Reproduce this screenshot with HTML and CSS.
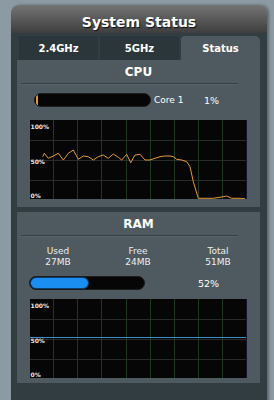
FILE: index.html
```html
<!DOCTYPE html>
<html>
<head>
<meta charset="utf-8">
<link rel="stylesheet" href="styles.css">
</head>
<body>
<div class="panel">
  <div class="header">System Status</div>
  <div class="body">
    <div class="tabs">
      <div class="tab">2.4GHz</div>
      <div class="tab">5GHz</div>
      <div class="tab active">Status</div>
    </div>
    <div class="section">
      <div class="title">CPU</div>
      <div class="rule"></div>
      <div class="row cpu-row">
        <div class="bar cpu-bar"><div class="fill orange" style="width:1%"></div></div>
        <span class="core">Core 1</span>
        <span class="pct">1%</span>
      </div>
      <svg class="chart" width="217" height="79" viewBox="0 0 217 79">
        <rect x="0" y="0" width="217" height="79" fill="#060606"/>
        <g stroke="#2a2a2a" stroke-width="1">
          <line x1="0" y1="20.5" x2="217" y2="20.5"/>
          <line x1="0" y1="40.5" x2="217" y2="40.5"/>
          <line x1="0" y1="60.5" x2="217" y2="60.5"/>
        </g>
        <g stroke="#1d3a21" stroke-width="1">
          <line x1="23.5" y1="0" x2="23.5" y2="79"/>
          <line x1="47.5" y1="0" x2="47.5" y2="79"/>
          <line x1="71.5" y1="0" x2="71.5" y2="79"/>
          <line x1="96.5" y1="0" x2="96.5" y2="79"/>
          <line x1="120.5" y1="0" x2="120.5" y2="79"/>
          <line x1="144.5" y1="0" x2="144.5" y2="79"/>
          <line x1="168.5" y1="0" x2="168.5" y2="79"/>
          <line x1="192.5" y1="0" x2="192.5" y2="79"/>
        </g>
        <polyline fill="none" stroke="#e39a34" stroke-width="1" points="12.7,36.7 14.3,33.3 18.3,38.3 23.3,36 28.3,33.3 33.3,40 38.3,33.3 43.3,30 48.3,39.3 53.3,36 58.3,36.7 63.3,40 68.3,36.7 73.3,35 78.3,38.3 83.3,34 88.3,37.3 91.7,40 96.7,34.3 100.7,42.7 105,35 110,34.3 115,40 120,40 125,38.3 130,36.7 135,36 140,36 143.3,36.7 146.7,39.3 151.7,40 156.7,41.7 160,46.7 163.3,61.7 168.3,78.3 183.3,78.3 190,77.3 196.7,76 201.7,78.3 210,78.3 215,78.8"/>
        <g class="lbl">
          <text x="0.5" y="8.5">100%</text>
          <text x="0.5" y="44">50%</text>
          <text x="0.5" y="78">0%</text>
        </g>
        <line x1="216.5" y1="0" x2="216.5" y2="79" stroke="#141430"/>
      </svg>
    </div>
    <div class="section ram">
      <div class="title">RAM</div>
      <div class="rule"></div>
      <div class="stats">
        <div class="stat">Used<br>27MB</div>
        <div class="stat">Free<br>24MB</div>
        <div class="stat">Total<br>51MB</div>
      </div>
      <div class="row ram-row">
        <div class="bar ram-bar"><div class="fill blue" style="width:52%"></div></div>
        <span class="pct">52%</span>
      </div>
      <svg class="chart" width="217" height="79" viewBox="0 0 217 79">
        <rect x="0" y="0" width="217" height="79" fill="#060606"/>
        <g stroke="#2a2a2a" stroke-width="1">
          <line x1="0" y1="20.5" x2="217" y2="20.5"/>
          <line x1="0" y1="40.5" x2="217" y2="40.5"/>
          <line x1="0" y1="60.5" x2="217" y2="60.5"/>
        </g>
        <g stroke="#1d3a21" stroke-width="1">
          <line x1="23.5" y1="0" x2="23.5" y2="79"/>
          <line x1="47.5" y1="0" x2="47.5" y2="79"/>
          <line x1="71.5" y1="0" x2="71.5" y2="79"/>
          <line x1="96.5" y1="0" x2="96.5" y2="79"/>
          <line x1="120.5" y1="0" x2="120.5" y2="79"/>
          <line x1="144.5" y1="0" x2="144.5" y2="79"/>
          <line x1="168.5" y1="0" x2="168.5" y2="79"/>
          <line x1="192.5" y1="0" x2="192.5" y2="79"/>
        </g>
        <line x1="0" y1="38.5" x2="217" y2="38.5" stroke="#3b8fc8" stroke-width="1"/>
        <g class="lbl">
          <text x="0.5" y="8.5">100%</text>
          <text x="0.5" y="44">50%</text>
          <text x="0.5" y="78">0%</text>
        </g>
        <line x1="216.5" y1="0" x2="216.5" y2="79" stroke="#141430"/>
      </svg>
    </div>
  </div>
</div>
</body>
</html>
```

FILE: styles.css
```css
html, body {
  margin: 0;
  padding: 0;
  height: 400px;
  overflow: hidden;
}
body {
  background: #8c9ba3;
  font-family: "DejaVu Sans", Verdana, sans-serif;
  color: #fff;
}
.panel {
  margin: 5px 0 0 11px;
  width: 256px;
  box-shadow: 2px 0 3px rgba(0,0,0,0.35);
  border-radius: 8px 8px 0 0;
}
.header {
  height: 22px;
  padding-top: 6px;
  line-height: 22px;
  font-size: 14px;
  font-weight: bold;
  text-align: center;
  border-radius: 8px 8px 0 0;
  background: linear-gradient(#747474, #3e3e3e);
  text-shadow: 1px 1px 1px #111;
}
.body {
  background: #323d42;
  padding: 3px 0 0 6px;
  height: 380px;
}
.tabs {
  display: flex;
  gap: 2px;
  margin-left: 2px;
  width: 241px;
}
.tab {
  flex: 1;
  height: 22px;
  padding-top: 2px;
  line-height: 22px;
  font-size: 10px;
  font-weight: bold;
  text-align: center;
  background: #2b363b;
  border-radius: 3px 3px 0 0;
}
.tab.active {
  background: #4e5a60;
  border-radius: 4px 5px 0 0;
}
.section {
  width: 243px;
  background: #4e5a60;
  padding-bottom: 8px;
}
.section.ram {
  margin-top: 5px;
  padding-bottom: 5px;
}
.title {
  padding-top: 4px;
  line-height: 17px;
  font-size: 12px;
  font-weight: bold;
  text-align: center;
}
.rule {
  margin: 2px 0 0 4px;
  width: 217px;
  height: 1px;
  background: #363f44;
  border-bottom: 1px solid #56636a;
}
.row {
  display: flex;
  align-items: center;
  width: 202px;
  font-size: 9px;
}
.cpu-row {
  margin-top: 8px;
  padding-left: 17px;
  width: 185px;
}
.ram-row {
  margin-top: 8px;
  padding-left: 12px;
  width: 190px;
}
.bar {
  height: 14px;
  background: #060606;
  border-radius: 7px;
  box-sizing: border-box;
  border: 1px solid #1c1c1c;
  overflow: hidden;
}
.cpu-bar { width: 117px; }
.ram-bar { width: 116px; }
.fill {
  height: 100%;
  border-radius: 6px;
}
.fill.orange {
  background: #e39a34;
  min-width: 2px;
  border-radius: 1px;
  margin-left: 1px;
}
.fill.blue {
  background: #1b8ef2;
  border: 1px solid #0a3d6a;
  box-sizing: border-box;
}
.core {
  margin-left: 3px;
}
.pct {
  margin-left: auto;
  font-size: 9.5px;
}
.chart {
  display: block;
  margin: 13px 0 0 13px;
}
.ram .chart {
  margin-top: 9px;
}
.lbl {
  font-family: "DejaVu Sans", Verdana, sans-serif;
  font-size: 6px;
  font-weight: bold;
  fill: #e6e6e6;
}
.stats {
  display: grid;
  grid-template-columns: 80px 80px 80px;
  margin: 9px 0 0 1px;
  font-size: 9px;
  line-height: 11px;
  text-align: center;
  color: #eee;
}
```
